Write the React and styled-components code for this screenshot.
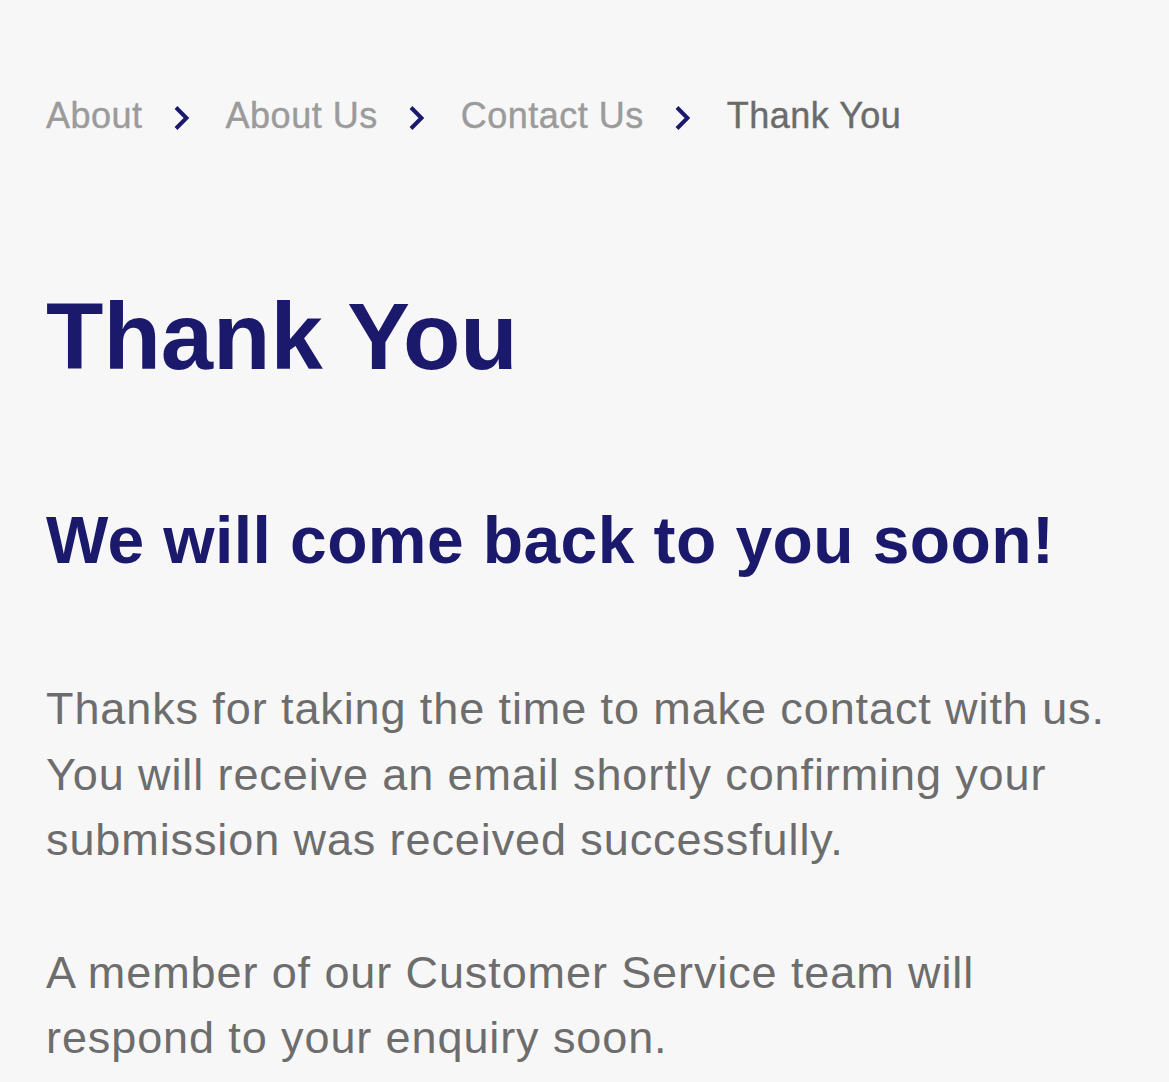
import React from "react";
import styled, { createGlobalStyle } from "styled-components";

const GlobalStyle = createGlobalStyle`
  html, body {
    margin: 0;
    padding: 0;
    background: #f7f7f7;
  }
  body {
    font-family: "Liberation Sans", Arial, sans-serif;
  }
`;

const Page = styled.main`
  min-height: 1082px;
  box-sizing: border-box;
  padding: 94px 46px 0 46px;
  background: #f7f7f7;
  display: flex;
  flex-direction: column;
`;

const Breadcrumb = styled.ol`
  list-style: none;
  margin: 0;
  padding: 0;
  display: flex;
  align-items: center;
  height: 44px;
`;

const Crumb = styled.li`
  display: flex;
  align-items: center;
  font-size: 36px;
  line-height: 44px;
  letter-spacing: 0.5px;
  color: ${(p) => (p.$current ? "#6b6b6b" : "#9b9b9b")};
  -webkit-text-stroke: 0.4px currentColor;
  white-space: nowrap;
`;

const CrumbLink = styled.a`
  color: inherit;
  text-decoration: none;
`;

const Separator = styled.svg`
  width: 15px;
  height: 24px;
  margin: 3px 37px 0 31px;
  flex: none;
`;

const Title = styled.h1`
  margin: 148px 0 0 0;
  font-size: 94px;
  line-height: 101px;
  font-weight: 700;
  color: #1b196b;
`;

const Subtitle = styled.h2`
  margin: 114px 0 0 0;
  font-size: 66px;
  line-height: 79px;
  font-weight: 700;
  letter-spacing: 0.4px;
  color: #1b196b;
  white-space: nowrap;
`;

const Paragraph = styled.p`
  margin: ${(p) => p.$top}px 0 0 0;
  font-size: 45px;
  line-height: 65.5px;
  letter-spacing: 0.9px;
  color: #6d6d6d;
  white-space: nowrap;
`;

const Chevron = () => (
  <Separator viewBox="0 0 15 24" aria-hidden="true">
    <path
      d="M2 1.5 L12.5 12 L2 22.5"
      fill="none"
      stroke="#1b196b"
      strokeWidth="4"
      strokeLinecap="butt"
      strokeLinejoin="miter"
    />
  </Separator>
);

const crumbs = [
  { label: "About", href: "#" },
  { label: "About Us", href: "#" },
  { label: "Contact Us", href: "#" },
  { label: "Thank You", current: true },
];

export default function App() {
  return (
    <>
      <GlobalStyle />
      <Page>
        <nav aria-label="Breadcrumb">
          <Breadcrumb>
            {crumbs.map((c, i) => (
              <React.Fragment key={c.label}>
                <Crumb $current={c.current}>
                  {c.current ? c.label : <CrumbLink href={c.href}>{c.label}</CrumbLink>}
                </Crumb>
                {i < crumbs.length - 1 && <Chevron />}
              </React.Fragment>
            ))}
          </Breadcrumb>
        </nav>
        <Title>Thank You</Title>
        <Subtitle>We will come back to you soon!</Subtitle>
        <Paragraph $top={96}>
          Thanks for taking the time to make contact with us.
          <br />
          You will receive an email shortly confirming your
          <br />
          submission was received successfully.
        </Paragraph>
        <Paragraph $top={67}>
          A member of our Customer Service team will
          <br />
          respond to your enquiry soon.
        </Paragraph>
      </Page>
    </>
  );
}
